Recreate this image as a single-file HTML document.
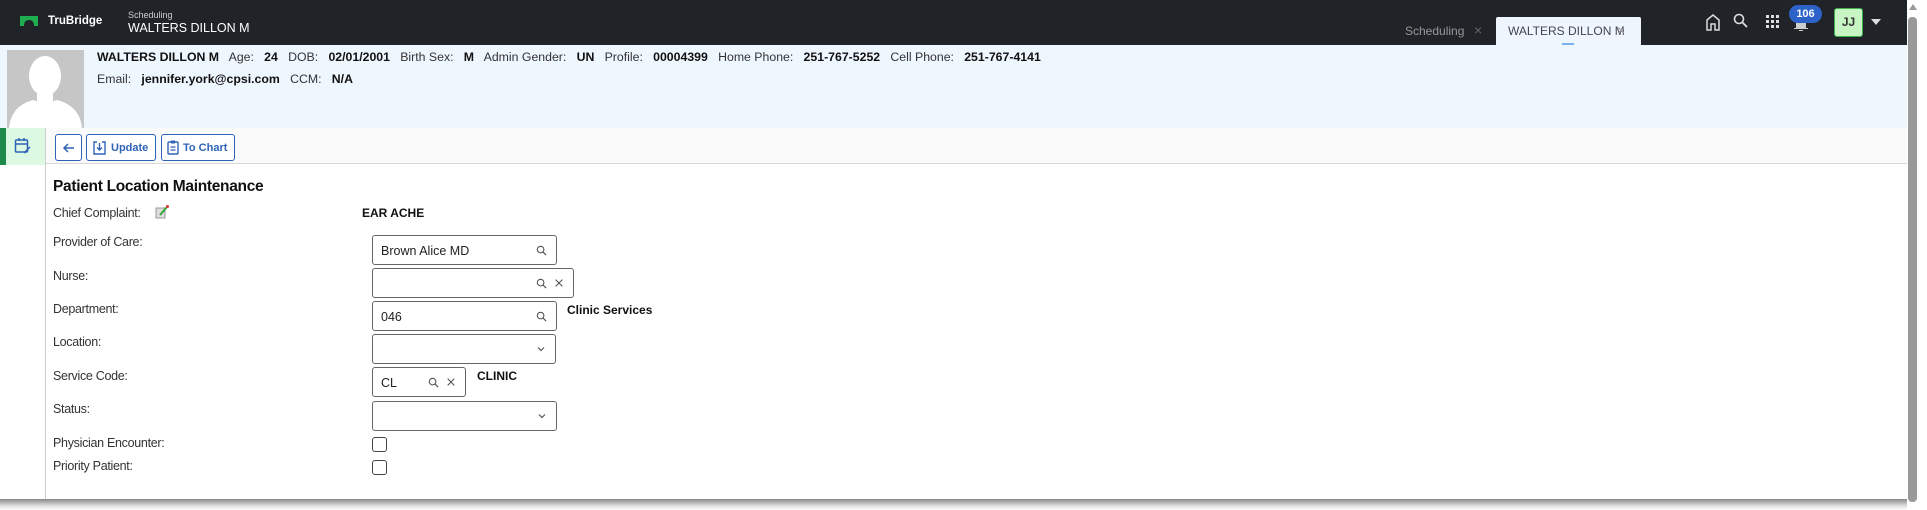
<!DOCTYPE html>
<html><head><meta charset="utf-8"><style>
*{box-sizing:border-box;margin:0;padding:0}
body{width:1927px;height:510px;overflow:hidden;background:#fff;font-family:"Liberation Sans",sans-serif;position:relative;color:#222}
.abs{position:absolute}
.hdr{left:0;top:0;width:1907px;height:45px;background:#202327}
.lbl{position:absolute;left:53px;font-size:12.5px;color:#333;letter-spacing:-0.3px}
.inp{position:absolute;left:372px;border:1px solid #666;border-radius:3px;background:#fff;height:30px;font-size:12.5px;padding:8px 8px;color:#222}
.ic{position:absolute;top:9px}
.btn{position:absolute;top:134px;height:27px;border:1.5px solid #2f63b8;border-radius:3px;background:#fff;color:#2f63b8;font-size:11px;font-weight:bold;display:flex;align-items:center;padding:0 6px;gap:5px;white-space:nowrap}
.cb{position:absolute;left:372px;width:15px;height:15px;border:1.3px solid #444;border-radius:3px}
.bn{font-size:12.3px;white-space:pre;letter-spacing:0;color:#333}
.bn b{color:#111}
</style></head><body>
<div class="abs hdr"></div>
<svg class="abs" style="left:20px;top:16px" width="18" height="10"><path d="M0 0H18V10H14Q14 4 9 4Q4 4 4 10H0Z" fill="#1fae4f"/></svg>
<div class="abs" style="left:48px;top:15px;color:#fff;font-weight:bold;font-size:11.5px">TruBridge</div>
<div class="abs" style="left:128px;top:10px;color:#ccc;font-size:9px">Scheduling</div>
<div class="abs" style="left:128px;top:21px;color:#fff;font-size:12.5px">WALTERS DILLON M</div>
<div class="abs" style="left:1405px;top:24px;color:#999;font-size:12px">Scheduling</div>
<div class="abs" style="left:1474px;top:22px;color:#666;font-size:14px">×</div>
<div class="abs" style="left:1496px;top:17px;width:145px;height:28px;background:#eef5fd;border-radius:2px 2px 0 0"></div>
<div class="abs" style="left:1508px;top:24px;color:#445;font-size:12px">WALTERS DILLON M</div>
<div class="abs" style="left:1617px;top:22px;color:#999;font-size:14px">×</div>
<div class="abs" style="left:1562px;top:43px;width:12px;height:2px;background:#7bb4f0"></div>
<svg class="abs" style="left:1705px;top:13px" width="16" height="18"><path d="M2 17V7L8 2L14 7V17H10V11H6V17Z" fill="none" stroke="#ddd" stroke-width="1.5"/></svg>
<svg class="abs" style="left:1733px;top:13px" width="16" height="16"><circle cx="6" cy="6" r="4.5" fill="none" stroke="#ddd" stroke-width="1.6"/><path d="M9.5 9.5L14 14" stroke="#ddd" stroke-width="1.8"/></svg>
<svg class="abs" style="left:1766px;top:15px" width="13" height="13" fill="#ddd"><rect x="0" y="0" width="3" height="3"/><rect x="5" y="0" width="3" height="3"/><rect x="10" y="0" width="3" height="3"/><rect x="0" y="5" width="3" height="3"/><rect x="5" y="5" width="3" height="3"/><rect x="10" y="5" width="3" height="3"/><rect x="0" y="10" width="3" height="3"/><rect x="5" y="10" width="3" height="3"/><rect x="10" y="10" width="3" height="3"/></svg>
<svg class="abs" style="left:1793px;top:18px" width="16" height="14"><path d="M3 10V5Q3 1 8 1Q13 1 13 5V10H15V11H1V10Z M6 12H10V13H6Z" fill="#ccc"/></svg>
<div class="abs" style="left:1789px;top:5px;width:33px;height:18px;border-radius:9px;background:#2d63c8;color:#fff;font-size:11px;font-weight:bold;text-align:center;line-height:18px">106</div>
<div class="abs" style="left:1834px;top:8px;width:29px;height:29px;background:#c8f5c4;border:1.5px solid #3bb34a;border-radius:3px;color:#333;font-weight:bold;font-size:12px;text-align:center;line-height:26px">JJ</div>
<div class="abs" style="left:1871px;top:19px;width:0;height:0;border-left:5px solid transparent;border-right:5px solid transparent;border-top:6px solid #ddd"></div>
<div class="abs" style="left:1907px;top:0;width:20px;height:510px;background:#fff"></div>
<div class="abs" style="left:1909px;top:4px;width:0;height:0;border-left:4px solid transparent;border-right:4px solid transparent;border-bottom:6px solid #999"></div>
<div class="abs" style="left:1908px;top:17px;width:9px;height:485px;background:#999;border-radius:4px"></div>
<div class="abs" style="left:0;top:45px;width:1907px;height:83px;background:#eef6fe"></div>
<div class="abs" style="left:7px;top:50px;width:77px;height:78px;background:#c6c6c6;overflow:hidden">
<svg width="77" height="78"><ellipse cx="38" cy="26" rx="16" ry="20" fill="#fff"/><path d="M2 78Q4 56 26 50L38 54L50 50Q73 56 75 78Z" fill="#fff"/><rect x="30" y="40" width="16" height="14" fill="#fff"/></svg></div>
<div class="abs bn" style="left:97px;top:50px"><b>WALTERS DILLON M</b>   Age:   <b>24</b>   DOB:   <b>02/01/2001</b>   Birth Sex:   <b>M</b>   Admin Gender:   <b>UN</b>   Profile:   <b>00004399</b>   Home Phone:   <b>251-767-5252</b>   Cell Phone:   <b>251-767-4141</b></div>
<div class="abs bn" style="left:97px;top:72px">Email:   <b>jennifer.york@cpsi.com</b>   CCM:   <b>N/A</b></div>
<div class="abs" style="left:45px;top:128px;width:1862px;height:36px;background:#fbfafb;border-bottom:1.5px solid #d8d8d8"></div>
<div class="abs" style="left:0;top:128px;width:6px;height:37px;background:#1e8a4c"></div>
<div class="abs" style="left:6px;top:128px;width:39px;height:37px;background:#dcf9e3"></div>
<svg class="abs" style="left:14px;top:137px" width="18" height="18"><rect x="1.5" y="3" width="12" height="12" rx="1" fill="none" stroke="#2f63b8" stroke-width="1.5"/><path d="M1.5 7H13.5M5 1V4M10 1V4M10 16L16 10" stroke="#2f63b8" stroke-width="1.5" fill="none"/></svg>
<div class="abs" style="left:45px;top:128px;width:1px;height:372px;background:#ccc"></div>
<div class="btn" style="left:55px;width:27px;justify-content:center;padding:0"><svg width="13" height="12"><path d="M12 6H2M6 2L2 6L6 10" stroke="#2f63b8" stroke-width="1.5" fill="none"/></svg></div>
<div class="btn" style="left:86px;width:70px"><svg width="13" height="14"><path d="M4 1H1V13H12V1H9M6.5 2V9M4 6.5L6.5 9L9 6.5" stroke="#2f63b8" stroke-width="1.4" fill="none"/></svg>Update</div>
<div class="btn" style="left:161px;width:74px;gap:4px;padding:0 5px"><svg width="12" height="15"><rect x="1" y="2" width="10" height="12" rx="1" fill="none" stroke="#2f63b8" stroke-width="1.4"/><rect x="4" y="0.5" width="4" height="3" fill="#2f63b8"/><path d="M3.5 7H8.5M3.5 10H8.5" stroke="#2f63b8" stroke-width="1.3"/></svg>To Chart</div>
<div class="abs" style="left:53px;top:178px;font-size:15.5px;font-weight:bold;color:#111;letter-spacing:-0.3px">Patient Location Maintenance</div>
<div class="lbl" style="top:206px">Chief Complaint:</div>
<svg class="abs" style="left:155px;top:205px" width="14" height="14"><rect x="1" y="3" width="9" height="10" fill="#ddd" stroke="#999"/><path d="M5 10L12 2" stroke="#3a3" stroke-width="2"/><circle cx="12.5" cy="1.5" r="1.5" fill="#d33"/></svg>
<div class="abs" style="left:362px;top:206px;font-size:12px;font-weight:bold;color:#111">EAR ACHE</div>
<div class="lbl" style="top:235px">Provider of Care:</div>
<div class="lbl" style="top:269px">Nurse:</div>
<div class="lbl" style="top:302px">Department:</div>
<div class="lbl" style="top:335px">Location:</div>
<div class="lbl" style="top:369px">Service Code:</div>
<div class="lbl" style="top:402px">Status:</div>
<div class="lbl" style="top:436px">Physician Encounter:</div>
<div class="lbl" style="top:459px">Priority Patient:</div>
<svg width="0" height="0" style="position:absolute"><defs>
<symbol id="mg" viewBox="0 0 12 12"><circle cx="5" cy="5" r="3.6" fill="none" stroke="#555" stroke-width="1.2"/><path d="M7.6 7.6L11 11" stroke="#555" stroke-width="1.3"/></symbol>
<symbol id="xx" viewBox="0 0 12 12"><path d="M2 2L10 10M10 2L2 10" stroke="#555" stroke-width="1.3"/></symbol>
<symbol id="cv" viewBox="0 0 10 10"><path d="M2 3.5L5 6.5L8 3.5" stroke="#555" stroke-width="1.2" fill="none"/></symbol>
</defs></svg>
<div class="inp" style="top:235px;width:185px">Brown Alice MD<svg class="ic" style="left:163px" width="11" height="11"><use href="#mg"/></svg></div>
<div class="inp" style="top:268px;width:202px"><svg class="ic" style="left:163px" width="11" height="11"><use href="#mg"/></svg><svg class="ic" style="left:181px" width="10" height="10"><use href="#xx"/></svg></div>
<div class="inp" style="top:301px;width:185px">046<svg class="ic" style="left:163px" width="11" height="11"><use href="#mg"/></svg></div>
<div class="abs" style="left:567px;top:303px;font-size:12px;font-weight:bold;color:#111">Clinic Services</div>
<div class="inp" style="top:334px;width:184px"><svg class="ic" style="left:163px" width="10" height="10"><use href="#cv"/></svg></div>
<div class="inp" style="top:367px;width:94px">CL<svg class="ic" style="left:55px" width="11" height="11"><use href="#mg"/></svg><svg class="ic" style="left:73px" width="10" height="10"><use href="#xx"/></svg></div>
<div class="abs" style="left:477px;top:369px;font-size:12px;font-weight:bold;color:#111">CLINIC</div>
<div class="inp" style="top:401px;width:185px"><svg class="ic" style="left:164px" width="10" height="10"><use href="#cv"/></svg></div>
<div class="cb" style="top:437px"></div>
<div class="cb" style="top:460px"></div>
<div class="abs" style="left:0;top:499px;width:1907px;height:11px;background:linear-gradient(#888,#ddd 60%,#fff)"></div>
</body></html>
